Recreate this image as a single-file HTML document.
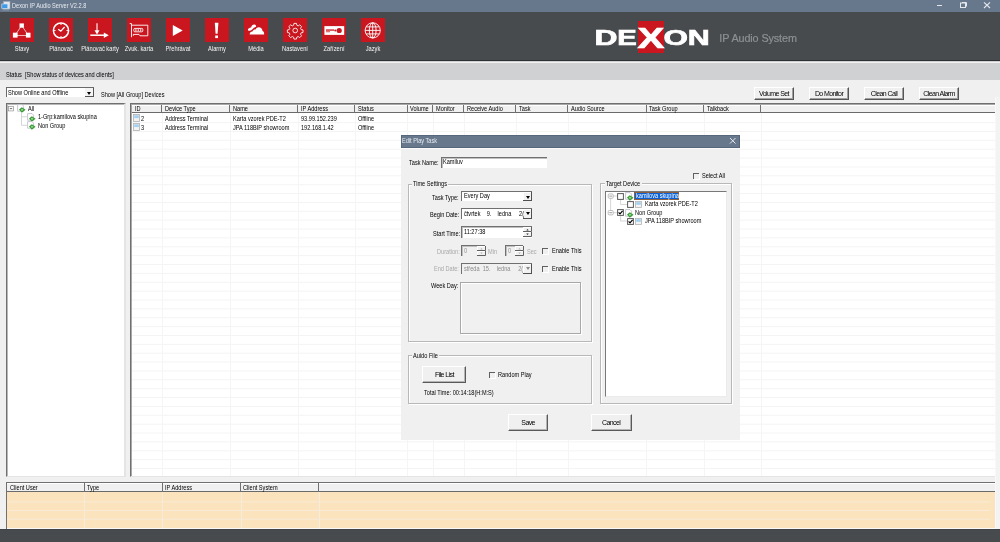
<!DOCTYPE html>
<html><head><meta charset="utf-8">
<style>
*{margin:0;padding:0;box-sizing:border-box}
html,body{width:1000px;height:542px;overflow:hidden;background:#f0f0f0;font-family:"Liberation Sans",sans-serif;color:#000}
.a{position:absolute}
.t{position:absolute;font-size:7px;line-height:8px;white-space:nowrap;transform:scaleX(.8) translateZ(0);transform-origin:0 0}
#title{left:0;top:0;width:1000px;height:12px;background:#67778c}
#tb{left:0;top:12px;width:1000px;height:49px;background:#484b4e}
.ic{position:absolute;top:18.4px;width:24px;height:24px;background:#c9161f}
.ic svg{position:absolute;left:0;top:0;width:24px;height:24px}
.lb{position:absolute;top:45px;font-size:7px;line-height:8px;color:#f4f4f4;white-space:nowrap;transform:scaleX(.82) translateZ(0);transform-origin:50% 0;text-align:center;width:60px}
.btn{position:absolute;top:86.5px;width:40px;height:13.3px;background:#f0f0f0;border-top:1px solid #fff;border-left:1px solid #fff;border-right:1px solid #555;border-bottom:1px solid #555;box-shadow:inset -1px -1px 0 #a0a0a0;font-size:7px;line-height:11.5px;text-align:center;white-space:nowrap;letter-spacing:-.6px}
.li{position:absolute;width:6px;height:7.5px;background:linear-gradient(#fff 0,#fff 12%,#8ccaf0 12%,#8ccaf0 55%,#f6f6f6 55%);border:1px solid #b0b0b0}
.tb{position:absolute;background:#fff;border-top:1px solid #707070;border-left:1px solid #707070;box-shadow:inset 1px 1px 0 #c0c0c0}
.tb.dis{background:#f0f0f0}
.cmb{position:absolute;background:#fff;border-top:1px solid #707070;border-left:1px solid #707070}
.cmb:after{content:"";position:absolute;right:0;top:0;width:9px;height:100%;background:#f2f2f2;border-right:1px solid #505050;border-bottom:1px solid #505050;box-shadow:inset 1px 1px 0 #fff;box-sizing:border-box}
.cmb:before{content:"";position:absolute;right:2px;top:3.6px;z-index:2;border-left:2.6px solid transparent;border-right:2.6px solid transparent;border-top:3px solid #000}
.cmb.dis{background:#f0f0f0}
.cmb.dis:before{border-top-color:#888}
.spin{position:absolute;width:8.5px}

.cb{position:absolute;width:6px;height:6px;border-top:1px solid #606060;border-left:1px solid #606060;box-shadow:1px 1px 0 #fff}
.gb{position:absolute;border:1px solid #b8b8b8;box-shadow:inset 1px 1px 0 #fff,1px 1px 0 #fff}
.bt{position:absolute;background:#f0f0f0;border-top:1px solid #fff;border-left:1px solid #fff;border-right:1px solid #5a5a5a;border-bottom:1px solid #5a5a5a;box-shadow:inset -1px -1px 0 #b4b4b4;font-size:7px;text-align:center;white-space:nowrap;letter-spacing:-.6px}
.btn span,.bt span{display:inline-block;transform:translateZ(0)}
</style></head><body>
<div class="a" id="title"></div>
<div class="a" id="tb"></div>
<!-- title bar -->
<svg class="a" style="left:1px;top:1px" width="10" height="10" viewBox="0 0 10 10"><rect x="2.5" y=".5" width="6.5" height="7.5" fill="#dfe6ee" stroke="#9aa6b4" stroke-width=".6"/><rect x=".8" y="3" width="6" height="4.5" fill="#3f9be8" stroke="#d8e4f0" stroke-width=".6"/><rect x="1.5" y="8" width="6.5" height="1.4" fill="#8a96a4"/></svg>
<div class="t" style="left:12px;top:2px;color:#e8ecf0">Dexon IP Audio Server V2.2.8</div>
<svg class="a" style="left:930px;top:0" width="70" height="12" viewBox="0 0 70 12"><g stroke="#e4e8ee" fill="none" stroke-width="1"><path d="M7 5.5H12"/><rect x="30.5" y="3" width="5" height="4.5"/><path d="M32 2.5H36.5V6.5"/><path d="M54 2.3L60 8M60 2.3L54 8" stroke-width="1.1"/></g></svg>
<!-- toolbar icons -->
<div class="ic" style="left:10px"><svg viewBox="0 0 24 24"><g stroke="#fff" stroke-width=".7" fill="none"><path d="M11.7 7.5L5.2 17.1M11.7 7.5L18.2 17.1M5.2 17.5H18.2"/></g><g fill="#fff"><rect x="9.5" y="5.4" width="4.4" height="4.3"/><rect x="2.9" y="14.7" width="4.7" height="4.9"/><rect x="15.9" y="14.7" width="4.6" height="4.9"/></g></svg></div>
<div class="ic" style="left:49px"><svg viewBox="0 0 24 24"><g stroke="#fff" fill="none"><circle cx="12" cy="12.5" r="7.6" stroke-width="1.5"/><path d="M9.2 11.2L11.8 13.1L15.6 9" stroke-width="1.2"/><path d="M12 5.6v1.4M12 18v1.4M5.1 12.5h1.4M17.5 12.5h1.4" stroke-width="1"/></g></svg></div>
<div class="ic" style="left:88px"><svg viewBox="0 0 24 24"><g stroke="#fff" fill="none"><path d="M9 5.2V13" stroke-width="1.1"/><path d="M2.3 17.2H16.5" stroke-width="1.5"/></g><g fill="#fff"><path d="M6.5 12.2H11.5L9 16.6Z"/><path d="M15.8 14.4L20.8 17.2L15.8 20Z"/></g></svg></div>
<div class="ic" style="left:127px"><svg viewBox="0 0 24 24"><g stroke="#fff" stroke-width=".9" fill="none"><path d="M2.7 5.6H4.5V19.2"/><path d="M4.5 7.2H20.8V17.8H13L12 16.4H6.3V17.8"/><rect x="6.8" y="10.4" width="9" height="3.4" rx="1"/></g><g fill="#fff"><circle cx="8.9" cy="12.1" r=".8"/><circle cx="11.3" cy="12.1" r=".8"/><circle cx="13.7" cy="12.1" r=".8"/></g></svg></div>
<div class="ic" style="left:166px"><svg viewBox="0 0 24 24"><path d="M6.8 7L16.7 12.5L6.8 18Z" fill="#fff"/></svg></div>
<div class="ic" style="left:205px"><svg viewBox="0 0 24 24"><path d="M9.8 4.8H13.4L12.6 15.8H10.6Z" fill="#fff"/><rect x="10.2" y="17.5" width="2.8" height="2.6" fill="#fff"/></svg></div>
<div class="ic" style="left:244px"><svg viewBox="0 0 24 24"><g fill="#fff"><path d="M5.7 16.6C5.5 14.6 6.8 13.3 8.5 13.4C9.3 11.9 10.6 11.3 11.6 11.6C12.2 10.1 13.4 9.3 14.6 9.3C16.8 9.3 18.4 11 18.5 13C19.6 13.3 20.3 14.6 20.1 16.6Z"/><path d="M4.2 12.4C3.6 11.6 4 10.6 5 10.5C5.5 9.7 6.4 9.4 7.1 9.6C7.5 7.6 9 6.3 10.6 6.6C11.7 6.9 12.3 7.8 12.1 8.8C10.6 9.4 9.2 10.3 8.2 11.4C7 12.3 5 13.1 4.2 12.4Z"/></g></svg></div>
<div class="ic" style="left:283px"><svg viewBox="0 0 24 24"><g stroke="#fff" stroke-width=".95" fill="none" transform="translate(12.2 12.5) scale(.9) translate(-12.2 -12.5)"><path d="M10.8 4.6h2.8l.4 2.1 1.5.7 1.8-1.2 2 2-1.2 1.8.7 1.5 2.1.4v2.8l-2.1.4-.7 1.5 1.2 1.8-2 2-1.8-1.2-1.5.7-.4 2.1h-2.8l-.4-2.1-1.5-.7-1.8 1.2-2-2 1.2-1.8-.7-1.5-2.1-.4v-2.8l2.1-.4.7-1.5-1.2-1.8 2-2 1.8 1.2 1.5-.7z"/><circle cx="12.2" cy="12.5" r="2.6"/></g></svg></div>
<div class="ic" style="left:322px"><svg viewBox="0 0 24 24"><rect x="2.4" y="8.1" width="19.8" height="8.8" fill="#fff"/><g fill="#c9161f"><circle cx="17.2" cy="12.5" r="2.6"/><circle cx="13.3" cy="12.5" r="1.1"/><rect x="4" y="11.4" width="8" height="1.3"/><rect x="4" y="13.4" width="4" height=".8"/></g></svg></div>
<div class="ic" style="left:361px"><svg viewBox="0 0 24 24"><g stroke="#fff" stroke-width=".9" fill="none"><circle cx="11.7" cy="12.4" r="7.6"/><ellipse cx="11.7" cy="12.4" rx="3.4" ry="7.6"/><path d="M11.7 4.8V20M4.1 12.4H19.3M5 8.9H18.4M5 15.9H18.4"/></g></svg></div>

<div class="lb" style="left:-8px">Stavy</div>
<div class="lb" style="left:31px">Plánovač</div>
<div class="lb" style="left:70px">Plánovač karty</div>
<div class="lb" style="left:109px">Zvuk. karta</div>
<div class="lb" style="left:148px">Přehrávat</div>
<div class="lb" style="left:187px">Alarmy</div>
<div class="lb" style="left:226px">Média</div>
<div class="lb" style="left:265px">Nastavení</div>
<div class="lb" style="left:304px">Zařízení</div>
<div class="lb" style="left:343px">Jazyk</div>

<!-- logo -->
<div class="a" style="left:638px;top:20.5px;width:26px;height:32.7px;background:#c9161f"></div>
<svg class="a" style="left:0;top:0" width="1000" height="60" viewBox="0 0 1000 60"><g fill="#fff" stroke="#fff" stroke-width=".7" font-family="Liberation Sans" font-weight="bold">
<text x="594.6" y="45.4" font-size="21.8" textLength="23" lengthAdjust="spacingAndGlyphs">D</text>
<text x="617.3" y="45.4" font-size="21.8" textLength="19.5" lengthAdjust="spacingAndGlyphs">E</text>
<text x="637.4" y="48.3" font-size="29" textLength="26.8" lengthAdjust="spacingAndGlyphs">X</text>
<text x="663.6" y="45.4" font-size="21.8" textLength="24.5" lengthAdjust="spacingAndGlyphs">O</text>
<text x="687.8" y="45.4" font-size="21.8" textLength="22" lengthAdjust="spacingAndGlyphs">N</text>
</g></svg>
<div class="a" style="left:719.3px;top:32.3px;font-size:10.8px;line-height:13px;color:#8d9093;letter-spacing:-.1px;-webkit-text-stroke:.2px #8d9093">IP Audio System</div>

<!-- status band -->
<div class="a" style="left:0;top:60px;width:1000px;height:1px;background:#2e3133"></div>
<div class="a" style="left:0;top:61px;width:1000px;height:19px;background:#d0d1d3"></div>
<div class="a" style="left:0;top:61.5px;width:1000px;height:1.3px;background:#f2f2f2"></div>
<div class="t" style="left:6px;top:71px">Status&nbsp; [Show status of devices and clients]</div>

<!-- combo -->
<div class="a" style="left:6px;top:87px;width:88px;height:10px;background:#fff;border-top:1px solid #6a6a6a;border-left:1px solid #6a6a6a"></div>
<div class="a" style="left:85px;top:88px;width:9px;height:9px;border-right:1px solid #555;border-bottom:1px solid #555;background:#f4f4f4"></div>
<div class="a" style="left:87px;top:91.5px;width:0;height:0;border-left:2.5px solid transparent;border-right:2.5px solid transparent;border-top:3px solid #000"></div>
<div class="t" style="left:8px;top:89px">Show Online and Offline</div>
<div class="t" style="left:101px;top:90.5px">Show [All Group] Devices</div>

<!-- buttons -->
<div class="btn" style="left:754px"><span>Volume Set</span></div>
<div class="btn" style="left:809px"><span>Do Monitor</span></div>
<div class="btn" style="left:864px"><span>Clean Call</span></div>
<div class="btn" style="left:919px"><span>Clean Alarm</span></div>

<!-- tree panel -->
<div class="a" style="left:6px;top:103px;width:120px;height:374px;background:#fff;border-top:1px solid #707070;border-left:1px solid #707070;border-right:2px solid #e4e4e4;border-bottom:1.5px solid #e4e4e4;box-shadow:inset 1px 1px 0 #b8b8b8"></div>
<svg class="a" style="left:6px;top:103px" width="120" height="30" viewBox="0 0 120 30">
<g fill="none" stroke="#c4c4c4" stroke-width=".7"><path d="M14 108.5H17.5" transform="translate(0,-103)"/><path d="M15.5 10V22.3H21M15.5 13.8H21"/></g>
<rect x="2.5" y="3.3" width="5" height="4.6" fill="#fff" stroke="#909090" stroke-width=".7"/><path d="M3.8 5.6H6.2" stroke="#333" stroke-width=".7"/>
</svg>
<svg class="a" style="left:17px;top:104px" width="9" height="9" viewBox="0 0 9 9"><path d="M.6 .6H5L6.6 2.2V7.2H.6Z" fill="#fff" stroke="#b8b8c4" stroke-width=".8"/><path d="M2 5.4L4.8 3.2L8.6 5.7L4.8 8.8Z" fill="#3a9a34"/><path d="M3.8 5.7L4.9 4.8L6.6 5.8L4.9 6.9Z" fill="#9ee09a"/></svg>
<svg class="a" style="left:27px;top:112.5px" width="9" height="9" viewBox="0 0 9 9"><path d="M.6 .6H5L6.6 2.2V7.2H.6Z" fill="#fff" stroke="#b8b8c4" stroke-width=".8"/><path d="M2 5.4L4.8 3.2L8.6 5.7L4.8 8.8Z" fill="#3a9a34"/><path d="M3.8 5.7L4.9 4.8L6.6 5.8L4.9 6.9Z" fill="#9ee09a"/></svg>
<svg class="a" style="left:27px;top:121px" width="9" height="9" viewBox="0 0 9 9"><path d="M.6 .6H5L6.6 2.2V7.2H.6Z" fill="#fff" stroke="#b8b8c4" stroke-width=".8"/><path d="M2 5.4L4.8 3.2L8.6 5.7L4.8 8.8Z" fill="#3a9a34"/><path d="M3.8 5.7L4.9 4.8L6.6 5.8L4.9 6.9Z" fill="#9ee09a"/></svg>
<div class="t" style="left:27.5px;top:104.5px">All</div>
<div class="t" style="left:37.5px;top:113px">1-Grp:kamilova skupina</div>
<div class="t" style="left:37.5px;top:121.5px">Non Group</div>

<!-- list panel -->
<div class="a" style="left:130px;top:103px;width:865px;height:374px;background:#fff;border-top:1px solid #707070;border-left:1px solid #707070;border-bottom:1.5px solid #e4e4e4;box-shadow:inset 1px 1px 0 #a8a8a8"></div>
<svg class="a" style="left:132px;top:0" width="863" height="477" viewBox="0 0 863 477"><g stroke="#f4f4f4" stroke-width="1"><path d="M0 122.60H863"/><path d="M0 131.47H863"/><path d="M0 140.34H863"/><path d="M0 149.21H863"/><path d="M0 158.08H863"/><path d="M0 166.95H863"/><path d="M0 175.82H863"/><path d="M0 184.69H863"/><path d="M0 193.56H863"/><path d="M0 202.43H863"/><path d="M0 211.30H863"/><path d="M0 220.17H863"/><path d="M0 229.04H863"/><path d="M0 237.91H863"/><path d="M0 246.78H863"/><path d="M0 255.65H863"/><path d="M0 264.52H863"/><path d="M0 273.39H863"/><path d="M0 282.26H863"/><path d="M0 291.13H863"/><path d="M0 300.00H863"/><path d="M0 308.87H863"/><path d="M0 317.74H863"/><path d="M0 326.61H863"/><path d="M0 335.48H863"/><path d="M0 344.35H863"/><path d="M0 353.22H863"/><path d="M0 362.09H863"/><path d="M0 370.96H863"/><path d="M0 379.83H863"/><path d="M0 388.70H863"/><path d="M0 397.57H863"/><path d="M0 406.44H863"/><path d="M0 415.31H863"/><path d="M0 424.18H863"/><path d="M0 433.05H863"/><path d="M0 441.92H863"/><path d="M0 450.79H863"/><path d="M0 459.66H863"/><path d="M0 468.53H863"/></g></svg>
<div class="a" style="left:132px;top:104.5px;width:863px;height:8.8px;background:#f0f0f0;border-top:1px solid #fff;border-bottom:1px solid #6a6a6a"></div>
<div class="a" style="left:161.0px;top:105px;width:1px;height:8px;background:#707070"></div><div class="a" style="left:161.5px;top:113.3px;width:1px;height:363px;background:#f5f5f5"></div><div class="t" style="left:135.0px;top:105px">ID</div>
<div class="a" style="left:229.0px;top:105px;width:1px;height:8px;background:#707070"></div><div class="a" style="left:229.5px;top:113.3px;width:1px;height:363px;background:#f5f5f5"></div><div class="t" style="left:164.5px;top:105px">Device Type</div>
<div class="a" style="left:297.0px;top:105px;width:1px;height:8px;background:#707070"></div><div class="a" style="left:297.5px;top:113.3px;width:1px;height:363px;background:#f5f5f5"></div><div class="t" style="left:232.5px;top:105px">Name</div>
<div class="a" style="left:354.2px;top:105px;width:1px;height:8px;background:#707070"></div><div class="a" style="left:354.7px;top:113.3px;width:1px;height:363px;background:#f5f5f5"></div><div class="t" style="left:300.5px;top:105px">IP Address</div>
<div class="a" style="left:406.5px;top:105px;width:1px;height:8px;background:#707070"></div><div class="a" style="left:407px;top:113.3px;width:1px;height:363px;background:#f5f5f5"></div><div class="t" style="left:357.7px;top:105px">Status</div>
<div class="a" style="left:432.0px;top:105px;width:1px;height:8px;background:#707070"></div><div class="a" style="left:432.5px;top:113.3px;width:1px;height:363px;background:#f5f5f5"></div><div class="t" style="left:410.0px;top:105px">Volume</div>
<div class="a" style="left:463.2px;top:105px;width:1px;height:8px;background:#707070"></div><div class="a" style="left:463.7px;top:113.3px;width:1px;height:363px;background:#f5f5f5"></div><div class="t" style="left:435.5px;top:105px">Monitor</div>
<div class="a" style="left:515.1px;top:105px;width:1px;height:8px;background:#707070"></div><div class="a" style="left:515.6px;top:113.3px;width:1px;height:363px;background:#f5f5f5"></div><div class="t" style="left:466.7px;top:105px">Receive Audio</div>
<div class="a" style="left:567.1px;top:105px;width:1px;height:8px;background:#707070"></div><div class="a" style="left:567.6px;top:113.3px;width:1px;height:363px;background:#f5f5f5"></div><div class="t" style="left:518.6px;top:105px">Task</div>
<div class="a" style="left:645.7px;top:105px;width:1px;height:8px;background:#707070"></div><div class="a" style="left:646.2px;top:113.3px;width:1px;height:363px;background:#f5f5f5"></div><div class="t" style="left:570.6px;top:105px">Audio Source</div>
<div class="a" style="left:703.1px;top:105px;width:1px;height:8px;background:#707070"></div><div class="a" style="left:703.6px;top:113.3px;width:1px;height:363px;background:#f5f5f5"></div><div class="t" style="left:649.2px;top:105px">Task Group</div>
<div class="a" style="left:760.2px;top:105px;width:1px;height:8px;background:#707070"></div><div class="a" style="left:760.7px;top:113.3px;width:1px;height:363px;background:#f5f5f5"></div><div class="t" style="left:706.6px;top:105px">Talkback</div>
<svg class="a" style="left:132.5px;top:114px" width="7" height="8" viewBox="0 0 7 8"><rect x=".5" y=".5" width="6" height="7" fill="#f2f2f2" stroke="#b0b0b0" stroke-width=".8"/><rect x="1.2" y="1.3" width="4.6" height="2.8" fill="#a2d2f2"/></svg><svg class="a" style="left:132.5px;top:122.8px" width="7" height="8" viewBox="0 0 7 8"><rect x=".5" y=".5" width="6" height="7" fill="#f2f2f2" stroke="#b0b0b0" stroke-width=".8"/><rect x="1.2" y="1.3" width="4.6" height="2.8" fill="#a2d2f2"/></svg>
<div class="t" style="left:141px;top:115.2px">2</div><div class="t" style="left:164.5px;top:115.2px">Address Terminal</div><div class="t" style="left:232.5px;top:115.2px">Karta vzorek PDE-T2</div><div class="t" style="left:300.5px;top:115.2px">93.99.152.239</div><div class="t" style="left:357.5px;top:115.2px">Offline</div>
<div class="t" style="left:141px;top:123.9px">3</div><div class="t" style="left:164.5px;top:123.9px">Address Terminal</div><div class="t" style="left:232.5px;top:123.9px">JPA 118BIP showroom</div><div class="t" style="left:300.5px;top:123.9px">192.168.1.42</div><div class="t" style="left:357.5px;top:123.9px">Offline</div>
<div class="a" style="left:995px;top:97px;width:5px;height:432px;background:#f3f3f3;border-left:1px solid #f8f8f8"></div>
<!-- bottom panel -->
<div class="a" style="left:6px;top:482.4px;width:989px;height:46.5px;background:#f8f8f8;border-top:1px solid #707070;border-left:1px solid #707070"></div>
<div class="a" style="left:7px;top:483.4px;width:988px;height:8.6px;background:#f0f0f0;border-top:1px solid #fff;border-bottom:1px solid #6a6a6a"></div>
<div class="a" style="left:7px;top:492px;width:988px;height:35.8px;background:#fbe3bd"></div><svg class="a" style="left:7px;top:492px" width="983" height="36" viewBox="0 0 983 36"><g stroke="#f8ebd8" stroke-width="1"><path d="M0 9.9H983"/><path d="M0 18.6H983"/><path d="M0 27.2H983"/></g></svg>
<div class="a" style="left:83.5px;top:483.4px;width:1px;height:8.6px;background:#707070"></div><div class="a" style="left:84.3px;top:492px;width:1px;height:35.8px;background:#f7ecdc"></div><div class="t" style="left:9.5px;top:484.4px">Client User</div>
<div class="a" style="left:161.5px;top:483.4px;width:1px;height:8.6px;background:#707070"></div><div class="a" style="left:162.3px;top:492px;width:1px;height:35.8px;background:#f7ecdc"></div><div class="t" style="left:86.5px;top:484.4px">Type</div>
<div class="a" style="left:240.0px;top:483.4px;width:1px;height:8.6px;background:#707070"></div><div class="a" style="left:240.8px;top:492px;width:1px;height:35.8px;background:#f7ecdc"></div><div class="t" style="left:164.5px;top:484.4px">IP Address</div>
<div class="a" style="left:318.1px;top:483.4px;width:1px;height:8.6px;background:#707070"></div><div class="a" style="left:318.90000000000003px;top:492px;width:1px;height:35.8px;background:#f7ecdc"></div><div class="t" style="left:243.0px;top:484.4px">Client System</div>
<div class="a" style="left:0;top:528.9px;width:1000px;height:14px;background:#484b4e;border-top:1.5px solid #3f4246"></div>
<!-- dialog -->
<div class="a" style="left:401px;top:134.5px;width:339px;height:305px;background:#f0f0f0"></div>
<div class="a" style="left:401px;top:134.5px;width:339px;height:13px;background:#67778c;border:1px solid #56667b"></div>
<div class="a" style="left:401px;top:147.5px;width:339px;height:1.5px;background:#fafafa"></div>
<div class="t" style="left:402.3px;top:136.5px;color:#e8ecf2">Edit Play Task</div>
<svg class="a" style="left:728px;top:136px" width="10" height="10" viewBox="0 0 10 10"><path d="M2 2L7.5 7.5M7.5 2L2 7.5" stroke="#eef1f5" stroke-width=".95"/></svg>

<div class="t" style="left:409px;top:159px">Task Name:</div>
<div class="tb" style="left:441px;top:157px;width:106px;height:10.5px"></div>
<div class="t" style="left:442.5px;top:158px">Kamiluv</div>

<div class="t" style="left:702px;top:172px">Select All</div>
<div class="cb" style="left:692.5px;top:172.5px"></div>

<!-- Time settings group -->
<div class="gb" style="left:408px;top:183.5px;width:184px;height:158px"></div>
<div class="a" style="left:411.5px;top:182px;width:36px;height:4px;background:#f0f0f0"></div><div class="t" style="left:412.5px;top:180px">Time Settings</div>

<div class="t" style="left:431.5px;top:193.5px">Task Type:</div>
<div class="cmb" style="left:461px;top:191.3px;width:70.5px;height:10px"></div>
<div class="t" style="left:463.5px;top:192.3px">Every Day</div>

<div class="t" style="left:430px;top:210.5px">Begin Date:</div>
<div class="cmb" style="left:461px;top:207.7px;width:70.5px;height:11px"></div>
<div class="t" style="left:464px;top:209.5px">čtvrtek&nbsp;&nbsp;&nbsp; 9.&nbsp;&nbsp;&nbsp; ledna&nbsp;&nbsp;&nbsp;&nbsp; 2(</div>

<div class="t" style="left:433px;top:229.5px">Start Time:</div>
<div class="tb" style="left:461px;top:226px;width:71px;height:11.5px"></div>
<div class="t" style="left:464px;top:228px">11:27:38</div>
<svg class="a" style="left:523px;top:227px" width="9" height="10" viewBox="0 0 9 10"><rect x="0" y="0" width="9" height="10" fill="#f0f0f0"/><path d="M.5 4.5V.5H8" stroke="#fff" stroke-width="1" fill="none"/><path d="M.5 9.5V5.5H8" stroke="#fff" stroke-width="1" fill="none"/><path d="M0 4.5H8.5V0" stroke="#606060" stroke-width="1" fill="none"/><path d="M0 9.5H8.5V5.0" stroke="#606060" stroke-width="1" fill="none"/><path d="M3.3 3.4H5.7L4.5 2.0Z" fill="#202020"/><path d="M3.3 6.6H5.7L4.5 8.0Z" fill="#202020"/></svg>

<div class="t" style="left:437px;top:247.5px;color:#a8a8a8">Duration:</div>
<div class="tb dis" style="left:461px;top:245px;width:24px;height:11px"></div>
<div class="t" style="left:463.5px;top:246.5px;color:#909090">0</div>
<svg class="a" style="left:476.5px;top:245.5px" width="9" height="10" viewBox="0 0 9 10"><rect x="0" y="0" width="9" height="10" fill="#f0f0f0"/><path d="M.5 4.5V.5H8" stroke="#fff" stroke-width="1" fill="none"/><path d="M.5 9.5V5.5H8" stroke="#fff" stroke-width="1" fill="none"/><path d="M0 4.5H8.5V0" stroke="#606060" stroke-width="1" fill="none"/><path d="M0 9.5H8.5V5.0" stroke="#606060" stroke-width="1" fill="none"/><path d="M3.3 3.4H5.7L4.5 2.0Z" fill="#b0b0b0"/><path d="M3.3 6.6H5.7L4.5 8.0Z" fill="#b0b0b0"/></svg>
<div class="t" style="left:488px;top:248px;color:#a8a8a8">Min</div>
<div class="tb dis" style="left:505px;top:245px;width:18px;height:11px"></div>
<div class="t" style="left:507.5px;top:246.5px;color:#909090">0</div>
<svg class="a" style="left:514.5px;top:245.5px" width="9" height="10" viewBox="0 0 9 10"><rect x="0" y="0" width="9" height="10" fill="#f0f0f0"/><path d="M.5 4.5V.5H8" stroke="#fff" stroke-width="1" fill="none"/><path d="M.5 9.5V5.5H8" stroke="#fff" stroke-width="1" fill="none"/><path d="M0 4.5H8.5V0" stroke="#606060" stroke-width="1" fill="none"/><path d="M0 9.5H8.5V5.0" stroke="#606060" stroke-width="1" fill="none"/><path d="M3.3 3.4H5.7L4.5 2.0Z" fill="#b0b0b0"/><path d="M3.3 6.6H5.7L4.5 8.0Z" fill="#b0b0b0"/></svg>
<div class="t" style="left:527px;top:248px;color:#a8a8a8">Sec</div>
<div class="cb" style="left:542.4px;top:248px"></div>
<div class="t" style="left:552px;top:247px">Enable This</div>

<div class="t" style="left:434.4px;top:265px;color:#a8a8a8">End Date:</div>
<div class="cmb dis" style="left:461px;top:262.6px;width:70.6px;height:11.4px"></div>
<div class="t" style="left:463.5px;top:264.5px;color:#8a8a8a">středa&nbsp; 15.&nbsp;&nbsp;&nbsp; ledna&nbsp;&nbsp;&nbsp;&nbsp; 2(</div>
<div class="cb" style="left:542.4px;top:265.6px"></div>
<div class="t" style="left:552px;top:264.5px">Enable This</div>

<div class="t" style="left:431px;top:282px">Week Day:</div>
<div class="a" style="left:459.5px;top:281.5px;width:121px;height:52px;border:1px solid #a8a8a8;box-shadow:inset 1px 1px 0 #fff, 1px 1px 0 #fff"></div>

<!-- Audio file group -->
<div class="gb" style="left:408px;top:355px;width:184px;height:49px"></div>
<div class="a" style="left:411.5px;top:353.5px;width:27px;height:4px;background:#f0f0f0"></div><div class="t" style="left:412.5px;top:351.5px">Auido File</div>
<div class="bt" style="left:422.4px;top:365.6px;width:44px;height:17px;line-height:15px"><span>File List</span></div>
<div class="cb" style="left:489px;top:371.7px"></div>
<div class="t" style="left:498px;top:370.5px">Random Play</div>
<div class="t" style="left:423.5px;top:388.5px">Total Time: 00:14:18(H:M:S)</div>

<!-- Target device group -->
<div class="gb" style="left:599.7px;top:183px;width:132px;height:221px"></div>
<div class="a" style="left:604.5px;top:181.5px;width:37px;height:4px;background:#f0f0f0"></div><div class="t" style="left:605.5px;top:179.5px">Target Device</div>
<div class="a" style="left:604.7px;top:191px;width:122px;height:206px;background:#fff;border-top:1px solid #787878;border-left:1px solid #787878;border-right:1.5px solid #ebebeb;border-bottom:1.5px solid #ebebeb"></div>

<!-- target tree -->
<svg class="a" style="left:605px;top:191px" width="40" height="36" viewBox="605 191 40 36"><g fill="none" stroke="#c4c4c4" stroke-width=".7"><path d="M610.6 198.5V210.5M613.2 196H617.3M613.2 212.7H617.3M620.6 199.5V204.5H627.2M620.6 216V221H627.2"/></g>
<g fill="#fff" stroke="#a0a0a0" stroke-width=".7"><rect x="608.2" y="193.9" width="5" height="4.4" rx="1.2"/><rect x="608.2" y="210.5" width="5" height="4.4" rx="1.2"/></g><path d="M609.3 196.1H612.1M609.3 212.7H612.1" stroke="#555" stroke-width=".6"/></svg>
<svg class="a" style="left:617px;top:192.6px" width="7" height="7" viewBox="0 0 7 7"><rect x=".6" y=".6" width="5.8" height="5.8" fill="#fff" stroke="#5a5a5a" stroke-width="1"/></svg><svg class="a" style="left:625.3px;top:192px" width="9" height="9" viewBox="0 0 9 9"><path d="M.6 .6H5L6.6 2.2V7.2H.6Z" fill="#fff" stroke="#b8b8c4" stroke-width=".8"/><path d="M2 5.4L4.8 3.2L8.6 5.7L4.8 8.8Z" fill="#3a9a34"/><path d="M3.8 5.7L4.9 4.8L6.6 5.8L4.9 6.9Z" fill="#9ee09a"/></svg><svg class="a" style="left:627px;top:201px" width="7" height="7" viewBox="0 0 7 7"><rect x=".6" y=".6" width="5.8" height="5.8" fill="#fff" stroke="#5a5a5a" stroke-width="1"/></svg><svg class="a" style="left:635px;top:201px" width="7" height="7" viewBox="0 0 7 7"><rect x=".5" y=".5" width="6" height="6" fill="#f4f4f4" stroke="#b4b4b4" stroke-width=".8"/><rect x="1.2" y="1.2" width="4.6" height="2.6" fill="#9fd0f2"/></svg><svg class="a" style="left:617px;top:209.3px" width="7" height="7" viewBox="0 0 7 7"><rect x=".6" y=".6" width="5.8" height="5.8" fill="#fff" stroke="#5a5a5a" stroke-width="1"/><path d="M1.6 3.4L3 4.9L5.6 1.9" fill="none" stroke="#000" stroke-width="1.2"/></svg><svg class="a" style="left:625.3px;top:208.7px" width="9" height="9" viewBox="0 0 9 9"><path d="M.6 .6H5L6.6 2.2V7.2H.6Z" fill="#fff" stroke="#b8b8c4" stroke-width=".8"/><path d="M2 5.4L4.8 3.2L8.6 5.7L4.8 8.8Z" fill="#3a9a34"/><path d="M3.8 5.7L4.9 4.8L6.6 5.8L4.9 6.9Z" fill="#9ee09a"/></svg><svg class="a" style="left:627px;top:217.6px" width="7" height="7" viewBox="0 0 7 7"><rect x=".6" y=".6" width="5.8" height="5.8" fill="#fff" stroke="#5a5a5a" stroke-width="1"/><path d="M1.6 3.4L3 4.9L5.6 1.9" fill="none" stroke="#000" stroke-width="1.2"/></svg><svg class="a" style="left:635px;top:217.6px" width="7" height="7" viewBox="0 0 7 7"><rect x=".5" y=".5" width="6" height="6" fill="#f4f4f4" stroke="#b4b4b4" stroke-width=".8"/><rect x="1.2" y="1.2" width="4.6" height="2.6" fill="#9fd0f2"/></svg>
<div class="a" style="left:634.4px;top:191.5px;width:44.8px;height:8.5px;background:#0a62d6;border:.7px solid #8a6040"></div>
<div class="t" style="left:635.5px;top:191.8px;color:#fff">kamilova skupina</div>
<div class="t" style="left:645.3px;top:200.2px">Karta vzorek PDE-T2</div>
<div class="t" style="left:635.3px;top:209px">Non Group</div>
<div class="t" style="left:645.3px;top:217.1px">JPA 118BIP showroom</div>
<div class="bt" style="left:508px;top:413.8px;width:40.3px;height:17.2px;line-height:15.5px"><span>Save</span></div>
<div class="bt" style="left:590.7px;top:413.8px;width:41px;height:17.2px;line-height:15.5px"><span>Cancel</span></div>
</body></html>
